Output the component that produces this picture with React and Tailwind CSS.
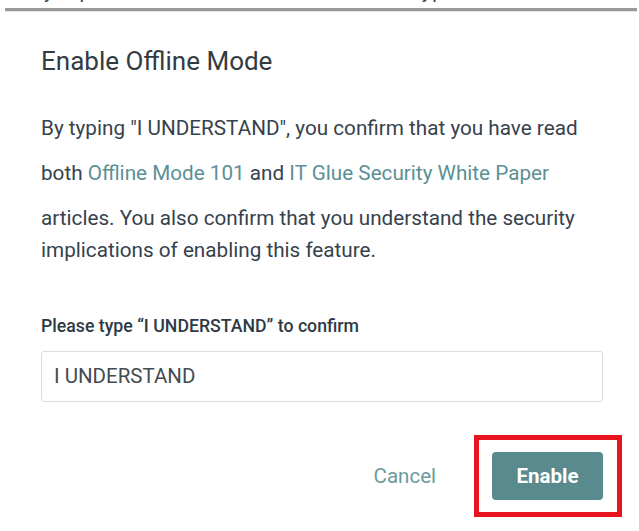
export default function App() {
  return (
    <div className="w-[639px] h-[531px] bg-white overflow-hidden" style={{ fontFamily: 'Roboto, "Noto Sans", sans-serif' }}>
      <div className="h-[8px] overflow-hidden">
        <div className="-mt-[21px] flex pl-[44px] text-[20px] leading-[24px] text-[#36424d]">
          <span>y</span>
          <span className="ml-[26px]">p</span>
          <span className="ml-[331px]">y</span>
          <span className="ml-[1px]">p</span>
        </div>
      </div>
      <div className="ml-[5px] mr-[2px] h-[3px] bg-[#999999]"></div>
      <div className="ml-[5px] mr-[2px] h-[1px] bg-[#e6e6e6]"></div>
      <div className="pl-[41px] pr-[36px] pt-[34px]">
        <h2 className="text-[26px] leading-[30px] text-[#333b42] font-normal">Enable Offline Mode</h2>
        <div className="mt-[36px] text-[20.7px] leading-[32px] text-[#36424d]">
          <p>By typing "I UNDERSTAND", you confirm that you have read</p>
          <p className="mt-[13px]">
            both <a className="text-[#5b9095]">Offline Mode 101</a> and{' '}
            <a className="text-[#5b9095]">IT Glue Security White Paper</a>
          </p>
          <p className="mt-[13px]">
            articles. You also confirm that you understand the security implications of enabling this feature.
          </p>
        </div>
        <label className="block mt-[49px] text-[17.7px] leading-[22px] font-medium text-[#2d3a45]">
          Please type “I UNDERSTAND” to confirm
        </label>
        <div className="mt-[14px] h-[51px] border border-[#dcdcdc] rounded-[3px] flex items-center pl-[12px] text-[20.5px] text-[#444b52]">
          I UNDERSTAND
        </div>
        <div className="mt-[50px] flex items-center justify-end">
          <button className="text-[20.5px] text-[#6a9a9e] mr-[56px]">Cancel</button>
          <div className="relative">
            <button className="w-[111px] h-[48px] rounded-[4px] bg-[#588a8e] text-white text-[20.5px] font-bold">Enable</button>
            <div className="absolute -left-[18px] -top-[17px] -right-[19px] -bottom-[17px] border-[5px] border-[#e8141e]"></div>
          </div>
        </div>
      </div>
    </div>
  );
}
